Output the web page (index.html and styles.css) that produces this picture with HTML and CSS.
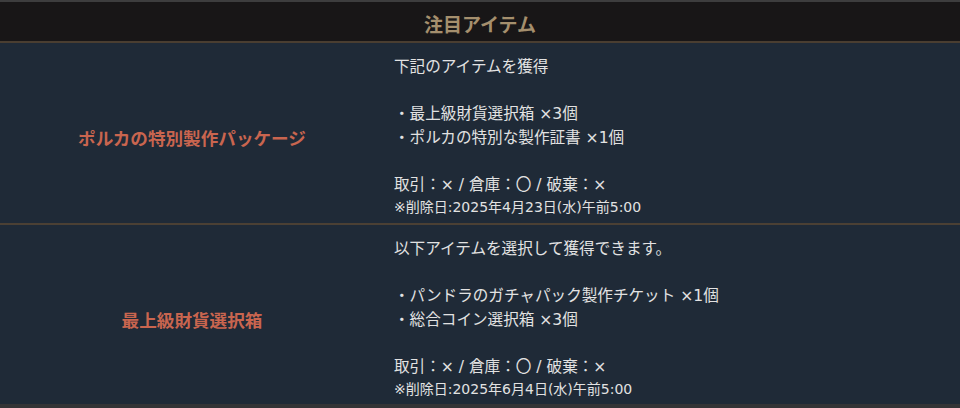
FILE: index.html
```html
<!DOCTYPE html>
<html lang="ja">
<head>
<meta charset="utf-8">
<title>注目アイテム</title>
<link rel="stylesheet" href="styles.css">
</head>
<body>
<div class="table">
  <div class="head">注目アイテム</div>
  <div class="row">
    <div class="name">ポルカの特別製作パッケージ</div>
    <div class="desc">
      <p class="line">下記のアイテムを獲得</p>
      <p class="line">&nbsp;</p>
      <p class="line">・最上級財貨選択箱 ×3個</p>
      <p class="line">・ポルカの特別な製作証書 ×1個</p>
      <p class="line">&nbsp;</p>
      <p class="line">取引：× / 倉庫：〇 / 破棄：×</p>
      <p class="note">※削除日:2025年4月23日(水)午前5:00</p>
    </div>
  </div>
  <div class="row">
    <div class="name">最上級財貨選択箱</div>
    <div class="desc">
      <p class="line">以下アイテムを選択して獲得できます。</p>
      <p class="line">&nbsp;</p>
      <p class="line">・パンドラのガチャパック製作チケット ×1個</p>
      <p class="line">・総合コイン選択箱 ×3個</p>
      <p class="line">&nbsp;</p>
      <p class="line">取引：× / 倉庫：〇 / 破棄：×</p>
      <p class="note">※削除日:2025年6月4日(水)午前5:00</p>
    </div>
  </div>
</div>
</body>
</html>
```

FILE: styles.css
```css
html, body {
  margin: 0;
  padding: 0;
  background: #1f2a37;
}
body {
  font-family: "Noto Sans CJK JP", "Noto Sans", sans-serif;
  color: #e2e2e2;
}
.table {
  width: 960px;
  border-top: 2px solid #3d3d3e;
  border-bottom: 4px solid #343436;
  background: #1f2a37;
}
.head {
  background: #181617;
  color: #a58f6d;
  font-weight: 700;
  font-size: 19px;
  line-height: 19px;
  text-align: center;
  padding: 12px 0 8px;
  border-bottom: 2px solid #4a3e31;
}
.row {
  display: grid;
  grid-template-columns: 384px 1fr;
  height: 180px;
}
.row:last-child {
  height: 179px;
}
.row + .row {
  border-top: 2px solid #4b4034;
}
.name {
  align-self: center;
  text-align: center;
  font-weight: 700;
  font-size: 17.6px;
  line-height: 24px;
  color: #c9654f;
  padding-top: 10px;
}
.desc {
  padding: 13px 10px 0;
  font-family: "DejaVu Sans", "Noto Sans CJK JP", sans-serif;
  font-size: 15.6px;
}
.desc p {
  margin: 0;
}
.line {
  line-height: 23.6px;
}
.note {
  font-size: 14px;
  line-height: 18px;
}
```
